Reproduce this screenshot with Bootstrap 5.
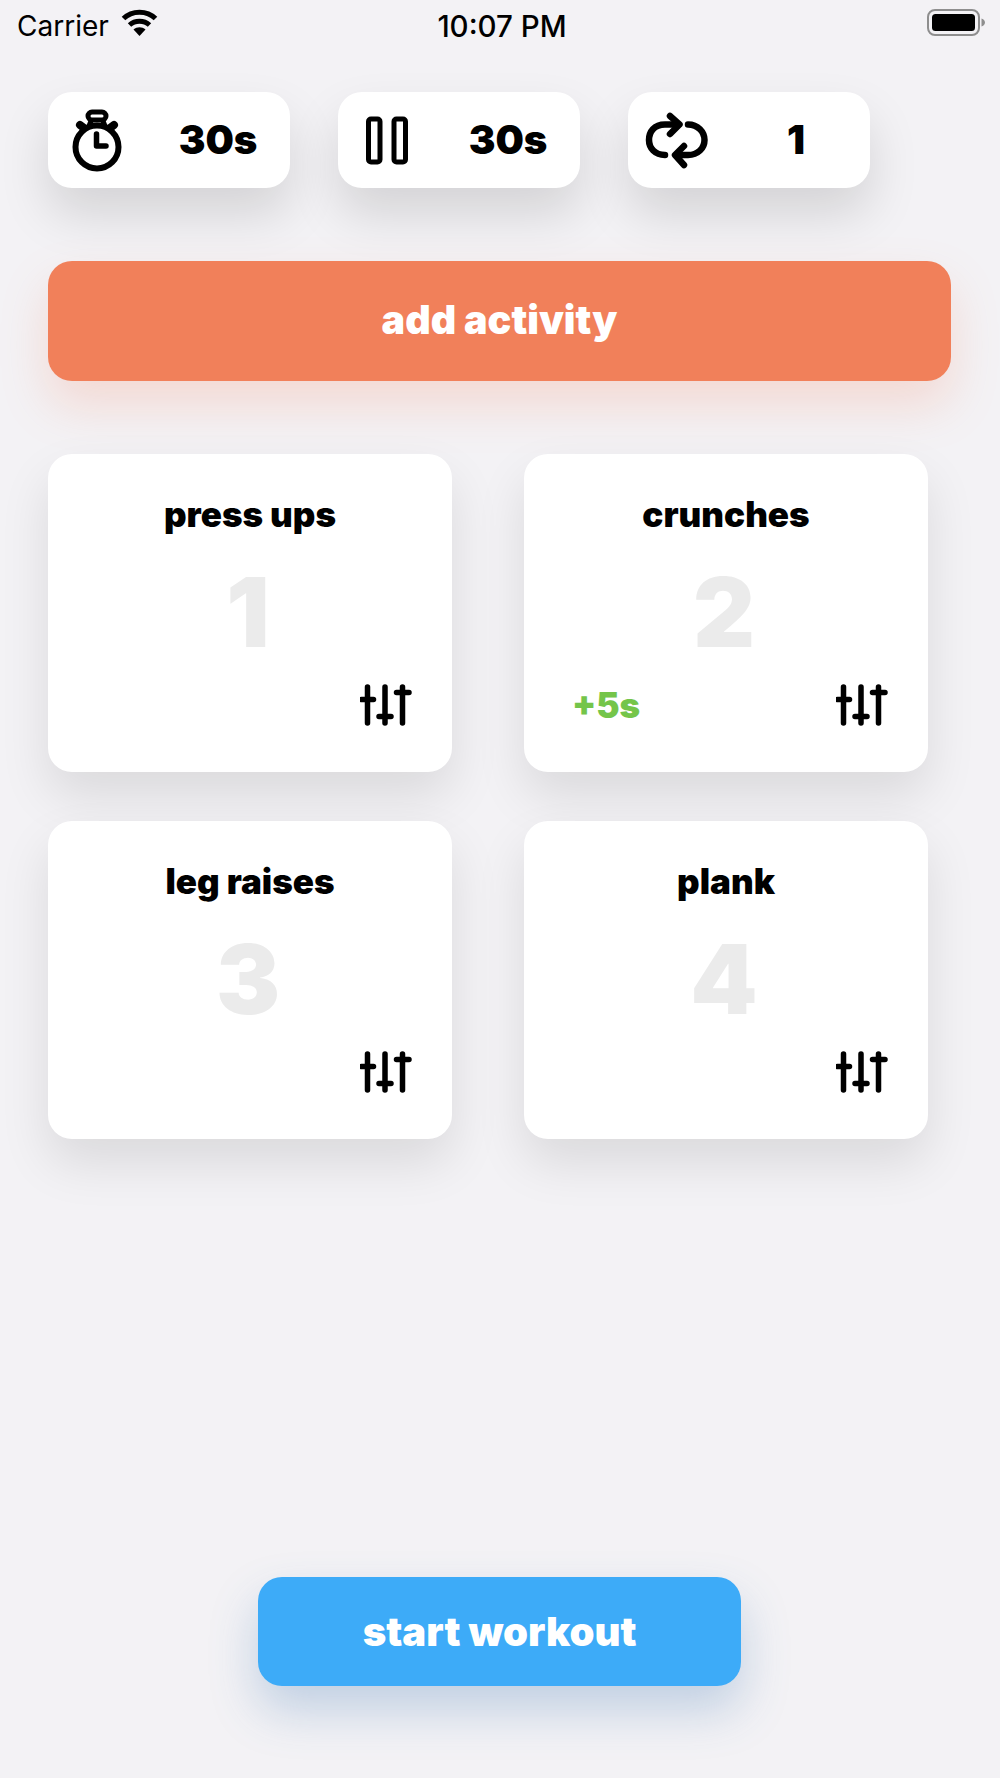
<!DOCTYPE html>
<html lang="en">
<head>
  <meta charset="UTF-8">
  <meta name="viewport" content="width=device-width, initial-scale=1.0">
  <title>Workout</title>
  <link href="https://cdn.jsdelivr.net/npm/bootstrap@5.3.0/dist/css/bootstrap.min.css" rel="stylesheet">
  <script src="https://cdn.jsdelivr.net/npm/bootstrap@5.3.0/dist/js/bootstrap.bundle.min.js"></script>
  <style>
    body { background: #f3f2f5; font-family: Inter, "Liberation Sans", sans-serif; color: #000; }
    .screen { width: 1000px; height: 1778px; }
    .status-bar { height: 52px; padding: 0 13px 0 17px; font-size: 28px; line-height: 52px; }
    .status-side { flex: 1 1 0; }
    .status-time { font-size: 29.500px; font-weight: 500; }
    .wifi-icon { width: 37px; height: 27px; margin-left: 12px; margin-top: -8px; }
    .battery-icon { width: 60px; height: 28px; margin-top: -6px; }
    .stat-row { padding: 40px 0 0 48px; gap: 48px; }
    .stat-pill { width: 242px; height: 96px; border-radius: 24px; box-shadow: 0 26px 50px rgba(0, 0, 0, .13); }
    .stat-icon { width: 100px; flex: none; }
    .stat-value { width: 140px; font-size: 40px; font-weight: 900; text-align: center; }
    .stat-value-narrow { padding-right: 4px; }
    .add-btn { display: block; width: 903px; height: 120px; margin: 73px 0 0 48px; border: 0; border-radius: 24px; background: #f1805a; color: #fff; font-size: 39.500px; font-weight: 900; box-shadow: 0 24px 48px rgba(244, 128, 91, .22); }
    .activity-grid { display: grid; grid-template-columns: 404px 404px; column-gap: 72px; row-gap: 49px; padding: 73px 0 0 48px; }
    .activity-tile { height: 318px; border-radius: 24px; box-shadow: 0 24px 50px rgba(0, 0, 0, .1); padding: 40px 40px 0 48px; }
    .tile-title { font-size: 35px; font-weight: 900; line-height: 40px; margin-left: -8px; text-align: center; }
    .tile-number { font-size: 96px; font-weight: 900; line-height: 116px; margin: 20px 0 14px -12px; color: #ebebeb; text-align: center; }
    .tile-foot { height: 42px; }
    .tile-bonus { font-size: 35px; font-weight: 900; color: #74c54a; }
    .start-wrap { position: absolute; left: 258px; top: 1577px; }
    .start-btn { display: block; width: 483px; height: 109px; border: 0; border-radius: 24px; background: #3dabf8; color: #fff; font-size: 40px; font-weight: 900; box-shadow: 0 24px 48px rgba(61, 120, 180, .28); }
  </style>
</head>
<body class="m-0">
  <svg width="0" height="0" class="position-absolute">
    <symbol id="sliders" viewBox="0 0 52 42">
      <g fill="none" stroke="#000" stroke-width="5.500" stroke-linecap="round">
        <path d="M7.500 3V39M1.500 15.500H13.500"/>
        <path d="M25 3V39M19 32.500H31"/>
        <path d="M42.500 3V39M36.500 8.500H49"/>
      </g>
    </symbol>
  </svg>

  <div class="screen position-relative overflow-hidden">
    <div class="status-bar d-flex align-items-center">
      <div class="status-side d-flex align-items-center">
        <span>Carrier</span>
        <svg class="wifi-icon" viewBox="0 0 37 27">
          <path d="M18.500 27L12.500 20.500C16 17.500 21 17.500 24.500 20.500Z"/>
          <path d="M8.500 16C14 11 23 11 28.500 16" fill="none" stroke="#000" stroke-width="5"/>
          <path d="M2.500 9.500C11 1 26 1 34.500 9.500" fill="none" stroke="#000" stroke-width="5"/>
        </svg>
      </div>
      <span class="status-time">10:07 PM</span>
      <div class="status-side d-flex justify-content-end align-items-center">
        <svg class="battery-icon" viewBox="0 0 60 28">
          <rect x="1" y="1" width="51" height="25" rx="7" fill="none" stroke="#8e8e8e" stroke-width="2"/>
          <rect x="5" y="5" width="43" height="17" rx="3.500"/>
          <path d="M54.500 9.500C57 10.500 58 12 58 13.500C58 15 57 16.500 54.500 17.500Z" fill="#8e8e8e"/>
        </svg>
      </div>
    </div>

    <div class="stat-row d-flex">
      <div class="stat-pill bg-white d-flex align-items-center">
        <div class="stat-icon d-flex">
          <svg width="100" height="96" viewBox="48 92 100 96">
            <g fill="none" stroke="#000" stroke-linecap="round" stroke-linejoin="round">
              <circle cx="97" cy="147" r="21.500" stroke-width="6"/>
              <rect x="88" y="112" width="18" height="8" rx="4" stroke-width="5"/>
              <path d="M91 121L89 126M103 121L105 126" stroke-width="5"/>
              <path d="M80 125L84 128M114 125L110 128" stroke-width="8"/>
              <path d="M96.500 134V146H106" stroke-width="5.500"/>
            </g>
          </svg>
        </div>
        <span class="stat-value">30s</span>
      </div>
      <div class="stat-pill bg-white d-flex align-items-center">
        <div class="stat-icon d-flex">
          <svg width="100" height="96" viewBox="338 92 100 96">
            <g fill="none" stroke="#000" stroke-width="5">
              <rect x="368.500" y="119" width="11.500" height="43" rx="2.500"/>
              <rect x="394" y="119" width="11.500" height="43" rx="2.500"/>
            </g>
          </svg>
        </div>
        <span class="stat-value">30s</span>
      </div>
      <div class="stat-pill bg-white d-flex align-items-center">
        <div class="stat-icon d-flex">
          <svg width="100" height="96" viewBox="628 92 100 96">
            <g fill="none" stroke="#000" stroke-width="6.500" stroke-linecap="round" stroke-linejoin="round">
              <path d="M677 124.500H665C654 124.500 649 132 649 140C649 148 655 155 665 155"/>
              <path d="M670 116L679.500 124.500L670 134"/>
              <path d="M688 124.500C698 124.500 704.500 132 704.500 140C704.500 148 698 155 688 155H677"/>
              <path d="M684 146L675 155L684 165"/>
            </g>
          </svg>
        </div>
        <span class="stat-value stat-value-narrow">1</span>
      </div>
    </div>

    <button class="add-btn" type="button">add activity</button>

    <div class="activity-grid">
      <div class="activity-tile bg-white">
        <div class="tile-title">press ups</div>
        <p class="tile-number">1</p>
        <div class="tile-foot d-flex justify-content-between align-items-center">
          <span class="tile-bonus"></span>
          <svg width="52" height="42"><use href="#sliders"/></svg>
        </div>
      </div>
      <div class="activity-tile bg-white">
        <div class="tile-title">crunches</div>
        <p class="tile-number">2</p>
        <div class="tile-foot d-flex justify-content-between align-items-center">
          <span class="tile-bonus">+5s</span>
          <svg width="52" height="42"><use href="#sliders"/></svg>
        </div>
      </div>
      <div class="activity-tile bg-white">
        <div class="tile-title">leg raises</div>
        <p class="tile-number">3</p>
        <div class="tile-foot d-flex justify-content-between align-items-center">
          <span class="tile-bonus"></span>
          <svg width="52" height="42"><use href="#sliders"/></svg>
        </div>
      </div>
      <div class="activity-tile bg-white">
        <div class="tile-title">plank</div>
        <p class="tile-number">4</p>
        <div class="tile-foot d-flex justify-content-between align-items-center">
          <span class="tile-bonus"></span>
          <svg width="52" height="42"><use href="#sliders"/></svg>
        </div>
      </div>
    </div>

    <div class="start-wrap">
      <button class="start-btn" type="button">start workout</button>
    </div>
  </div>
</body>
</html>
